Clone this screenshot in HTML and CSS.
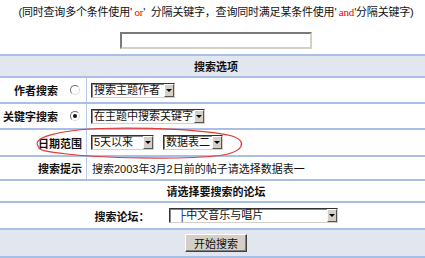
FILE: index.html
```html
<!DOCTYPE html>
<html lang="zh-CN">
<head>
  <meta charset="UTF-8">
  <title>搜索</title>
  <link rel="stylesheet" href="styles.css">
</head>
<body>
<div class="page">

  <p class="hint">(同时查询多个条件使用'<span class="kw"> or</span>'&nbsp; 分隔关键字，查询同时满足某条件使用'<span class="kw"> and</span>'分隔关键字)</p>

  <div class="keyword">
    <input class="textbox" type="text" name="keyword">
  </div>

  <div class="options">
    <div class="row head">搜索选项</div>

    <div class="row r1">
      <div class="label">作者搜索 <span class="radio"></span></div>
      <div class="field">
        <div class="select w1"><span class="val">搜索主题作者</span><span class="arrow"></span></div>
      </div>
    </div>

    <div class="row r2">
      <div class="label">关键字搜索 <span class="radio checked"></span></div>
      <div class="field">
        <div class="select w2"><span class="val">在主题中搜索关键字</span><span class="arrow"></span></div>
      </div>
    </div>

    <div class="row r3">
      <div class="label pad">日期范围</div>
      <div class="field">
        <div class="select w3"><span class="val">5天以来</span><span class="arrow"></span></div>
        <div class="select w4"><span class="val">数据表二</span><span class="arrow"></span></div>
      </div>
    </div>

    <div class="row r4">
      <div class="label pad">搜索提示</div>
      <div class="field tip">搜索2003年3月2日前的帖子请选择数据表一</div>
    </div>

    <div class="row r5 center bold">请选择要搜索的论坛</div>

    <div class="row r6 center">
      <span class="bold">搜索论坛：</span>
      <div class="select w5"><span class="val forum">├中文音乐与唱片</span><span class="arrow"></span></div>
    </div>

    <div class="row r7 head">
      <button class="btn" type="submit">开始搜索</button>
    </div>
  </div>

  <!-- hand drawn mark -->
  <svg class="mark" width="425" height="258" viewBox="0 0 425 258">
    <path d="M39,147 C29,138 60,130 100,128.5 C150,127 207,130 232,136 C248,141 244,152 220,155.5 C180,160 100,158 67,154 C48,152 37,150 39,147" fill="none" stroke="#e23a3a" stroke-width="1.2"/>
  </svg>

</div>
</body>
</html>
```

FILE: styles.css
```css
html, body {
  margin: 0;
  overflow: hidden;
  background: #fff;
}
.page {
  position: relative;
  width: 432px;
  font-family: "Liberation Sans", "Noto Sans CJK SC", sans-serif;
  font-size: 11px;
  color: #111;
}
.hint {
  margin: 0;
  height: 24px;
  line-height: 24px;
  text-align: center;
  white-space: nowrap;
  letter-spacing: -0.2px;
}
.kw {
  color: #e00;
  font-family: "Liberation Serif", serif;
}
.keyword {
  height: 30px;
  text-align: center;
}
.textbox {
  box-sizing: border-box;
  width: 192px;
  height: 17px;
  margin-top: 8px;
  padding: 0;
  border: 2px solid;
  border-color: #7a7a7a #d4d0c8 #d4d0c8 #7a7a7a;
  background: #fff;
  vertical-align: top;
}
.row {
  box-sizing: border-box;
  display: flex;
  align-items: stretch;
  border-bottom: 2px solid #a9c0e6;
}
.head {
  background: #e2e7ef;
  justify-content: center;
  align-items: center;
  font-weight: bold;
}
.options > .head:first-child {
  border-top: 2px solid #a9c0e6;
  height: 24px;
}
.r1, .r2 { height: 26px; }
.r3 { height: 27px; }
.r4 { height: 24px; }
.r5 { height: 22px; }
.r6 { height: 27px; }
.r7 { height: 28px; }

.label {
  box-sizing: border-box;
  width: 87px;
  flex: none;
  display: flex;
  align-items: center;
  justify-content: flex-end;
  padding-right: 6px;
  border-right: 1px solid #b9cbe9;
  font-weight: bold;
  white-space: nowrap;
}
.label.pad {
  padding-right: 4px;
}
.field {
  display: flex;
  align-items: center;
  gap: 9px;
  padding-left: 4px;
}
.tip {
  padding-left: 5px;
}
.center {
  justify-content: center;
  align-items: center;
}
.bold {
  font-weight: bold;
}
.r6 {
  gap: 19px;
}

.radio {
  box-sizing: border-box;
  display: inline-block;
  width: 10px;
  height: 10px;
  margin-left: 12px;
  border-radius: 50%;
  border: 1px solid;
  border-color: #6f6f6f #dcdcdc #dcdcdc #6f6f6f;
  background: #fff;
  position: relative;
}
.radio.checked::after {
  content: "";
  position: absolute;
  left: 2px;
  top: 2px;
  width: 4px;
  height: 4px;
  border-radius: 50%;
  background: #111;
}

.select {
  box-sizing: border-box;
  display: flex;
  align-items: stretch;
  height: 15px;
  border: 1px solid;
  border-color: #333 #d4d0c8 #d4d0c8 #333;
  box-shadow: inset 1px 1px 0 #888;
  background: #fff;
}
.select .val {
  flex: 1;
  padding-left: 2px;
  line-height: 13px;
  white-space: nowrap;
}
.select .val.forum {
  padding-left: 9px;
}
.select .arrow {
  box-sizing: border-box;
  width: 10px;
  flex: none;
  background: #d4d0c8;
  border: 1px solid;
  border-color: #fff #555 #555 #fff;
  position: relative;
}
.select .arrow::after {
  content: "";
  position: absolute;
  left: 1px;
  top: 4px;
  border-left: 3px solid transparent;
  border-right: 3px solid transparent;
  border-top: 3px solid #000;
}
.w1 { width: 84px; }
.w2 { width: 114px; }
.w3 { width: 63px; }
.w4 { width: 60px; }
.w5 { width: 169px; }

.btn {
  box-sizing: border-box;
  width: 62px;
  height: 18px;
  padding: 0;
  font-family: "Noto Sans CJK SC", sans-serif;
  font-size: 11px;
  line-height: 14px;
  color: #111;
  background: #d4d0c8;
  border: 1px solid;
  border-color: #fff #404040 #404040 #fff;
  box-shadow: inset -1px -1px 0 #808080;
}

.mark {
  position: absolute;
  left: 0;
  top: 0;
  pointer-events: none;
}
```
